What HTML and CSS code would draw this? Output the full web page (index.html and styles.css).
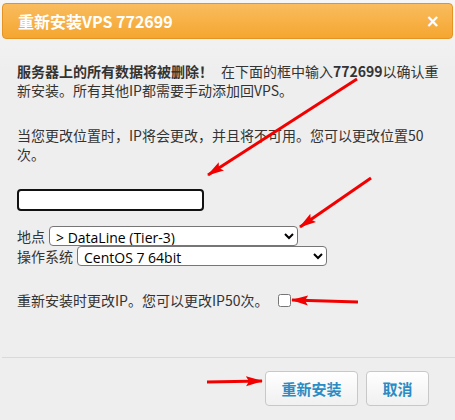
FILE: index.html
```html
<!DOCTYPE html>
<html lang="zh-CN">
<head>
<meta charset="utf-8">
<title>重新安装VPS 772699</title>
<link rel="stylesheet" href="styles.css">
</head>
<body>
<div class="dialog">
  <div class="header">
    <span class="title">重新安装VPS 772699</span>
    <span class="close">×</span>
  </div>
  <div class="content">
    <p class="para p1"><b>服务器上的所有数据将被删除！</b><span class="gap"></span>在下面的框中输入<b>772699</b>以确认重新安装。所有其他IP都需要手动添加回VPS。</p>
    <p class="para p2">当您更改位置时，IP将会更改，并且将不可用。您可以更改位置50次。</p>
    <input class="confirm" type="text">
    <div class="fields">
      <div class="field"><span class="label">地点</span><select class="sel sel-loc"><option>&gt; DataLine (Tier-3)</option></select></div>
      <div class="field"><span class="label">操作系统</span><select class="sel sel-os"><option>CentOS 7 64bit</option></select></div>
    </div>
    <div class="ipline"><span>重新安装时更改IP。您可以更改IP50次。</span><input class="chk" type="checkbox"></div>
  </div>
  <div class="footer">
    <button class="btn btn-main">重新安装</button>
    <button class="btn btn-cancel">取消</button>
  </div>
</div>
<svg class="arrows" width="455" height="420" viewBox="0 0 455 420">
  <defs>
    <marker id="head" markerUnits="userSpaceOnUse" markerWidth="18" markerHeight="12" refX="16" refY="6" orient="auto">
      <path d="M0,1 L17,6 L0,11 L3,6 Z" fill="#f20000"/>
    </marker>
  </defs>
  <line x1="357" y1="79" x2="208" y2="175" stroke="#f20000" stroke-width="3" marker-end="url(#head)"/>
  <line x1="371" y1="178" x2="300" y2="227" stroke="#f20000" stroke-width="3" marker-end="url(#head)"/>
  <line x1="358" y1="302" x2="292" y2="300" stroke="#f20000" stroke-width="3" marker-end="url(#head)"/>
  <line x1="207" y1="382" x2="262" y2="381" stroke="#f20000" stroke-width="3" marker-end="url(#head)"/>
</svg>
</body>
</html>
```
FILE: styles.css
```css
html, body {
  margin: 0;
  padding: 0;
}
body {
  width: 455px;
  height: 420px;
  background: #eeeeee;
  font-family: "Noto Sans CJK SC", "Noto Sans", sans-serif;
  font-size: 14px;
  color: #333333;
  position: relative;
  overflow: hidden;
}
.dialog {
  height: 418px;
  border-bottom: 2px solid #d4d4d4;
  background: linear-gradient(#f6f6f6 0px, #eeeeee 70px);
  padding-top: 3px;
  box-sizing: content-box;
}
.header {
  margin: 0 2px;
  height: 34px;
  border: 1px solid #e39425;
  border-radius: 4px;
  background: linear-gradient(#f9bc5f, #f5a62f);
  display: flex;
  align-items: center;
  justify-content: space-between;
  padding: 0 12px 0 15px;
}
.title {
  color: #ffffff;
  font-weight: bold;
  font-size: 16px;
  line-height: 20px;
}
.close {
  color: #ffffff;
  font-weight: bold;
  font-size: 17px;
  line-height: 18px;
  font-family: "DejaVu Sans", sans-serif;
}
.content {
  padding: 0 12px 0 17px;
}
.para {
  margin: 0;
  line-height: 19px;
}
.para b {
  font-weight: bold;
  color: #333;
}
.gap {
  display: inline-block;
  width: 8px;
}
.p1 {
  margin-top: 23px;
}
.p2 {
  margin-top: 26px;
  margin-right: 5px;
}
.confirm {
  display: block;
  margin: 25px 0 0 0;
  box-sizing: border-box;
  width: 187px;
  height: 22px;
  border: 2px solid #111111;
  border-radius: 4px;
  background: #ffffff;
  padding: 0 4px;
  outline: none;
}
.fields {
  margin-top: 15px;
  display: flex;
  flex-direction: column;
}
.field {
  display: flex;
  align-items: center;
  height: 20px;
}
.label {
  line-height: 20px;
  margin-right: 4px;
}
.sel {
  height: 20px;
  box-sizing: border-box;
  font-family: "Open Sans", "Noto Sans", sans-serif;
  font-size: 14px;
  color: #000;
  background: #fff;
  border: 1px solid #767676;
  border-radius: 4px;
  padding: 0 0 0 2px;
}
.sel-loc {
  width: 249px;
}
.sel-os {
  width: 250px;
}
.ipline {
  margin-top: 25px;
  display: flex;
  align-items: center;
  line-height: 19px;
}
.chk {
  margin: 0 0 0 10px;
  width: 13px;
  height: 13px;
}
.footer {
  margin-top: 47px;
  border-top: 1px solid #d9d9d9;
  margin-left: 2px;
  padding: 13px 26px 0 0;
  display: flex;
  justify-content: flex-end;
  gap: 8px;
}
.btn {
  height: 35px;
  border: 1px solid #c8c8c8;
  border-radius: 4px;
  background: linear-gradient(#ffffff, #f0f0f0);
  color: #2a8cc4;
  font-family: "Noto Sans CJK SC", sans-serif;
  font-weight: bold;
  font-size: 15px;
  padding: 0;
}
.btn-main {
  width: 93px;
}
.btn-cancel {
  width: 63px;
}
.arrows {
  position: absolute;
  left: 0;
  top: 0;
  pointer-events: none;
}
```
